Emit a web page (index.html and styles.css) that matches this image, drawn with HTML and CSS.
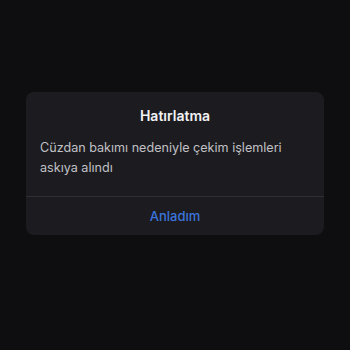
FILE: index.html
```html
<!DOCTYPE html>
<html lang="tr">
<head>
<meta charset="utf-8">
<link rel="stylesheet" href="styles.css">
</head>
<body>
<div class="screen">
  <div class="dialog">
    <div class="content">
      <div class="title">Hatırlatma</div>
      <div class="message">Cüzdan bakımı nedeniyle çekim işlemleri askıya alındı</div>
    </div>
    <div class="actions">
      <button class="btn">Anladım</button>
    </div>
  </div>
</div>
</body>
</html>
```
FILE: styles.css
```css
html, body {
  margin: 0;
  padding: 0;
  background: #0e0e10;
}
.screen {
  width: 350px;
  height: 350px;
  display: flex;
  align-items: flex-start;
  justify-content: center;
  padding-top: 92px;
  box-sizing: border-box;
  font-family: Inter, "Noto Sans", sans-serif;
}
.dialog {
  width: 298px;
  background: #1c1c20;
  border-radius: 8px;
  overflow: hidden;
}
.content {
  padding: 14px 14px 18px;
}
.title {
  color: #f2f2f4;
  font-size: 14px;
  font-weight: 600;
  text-align: center;
  line-height: 20px;
  margin-bottom: 12px;
}
.message {
  color: #c0c0c5;
  font-size: 12.6px;
  line-height: 20px;
}
.actions {
  border-top: 1px solid #2e2e33;
}
.btn {
  display: block;
  width: 100%;
  height: 38px;
  background: none;
  border: none;
  color: #3b74dc;
  font-family: inherit;
  font-size: 13px;
  font-weight: 500;
}
```
